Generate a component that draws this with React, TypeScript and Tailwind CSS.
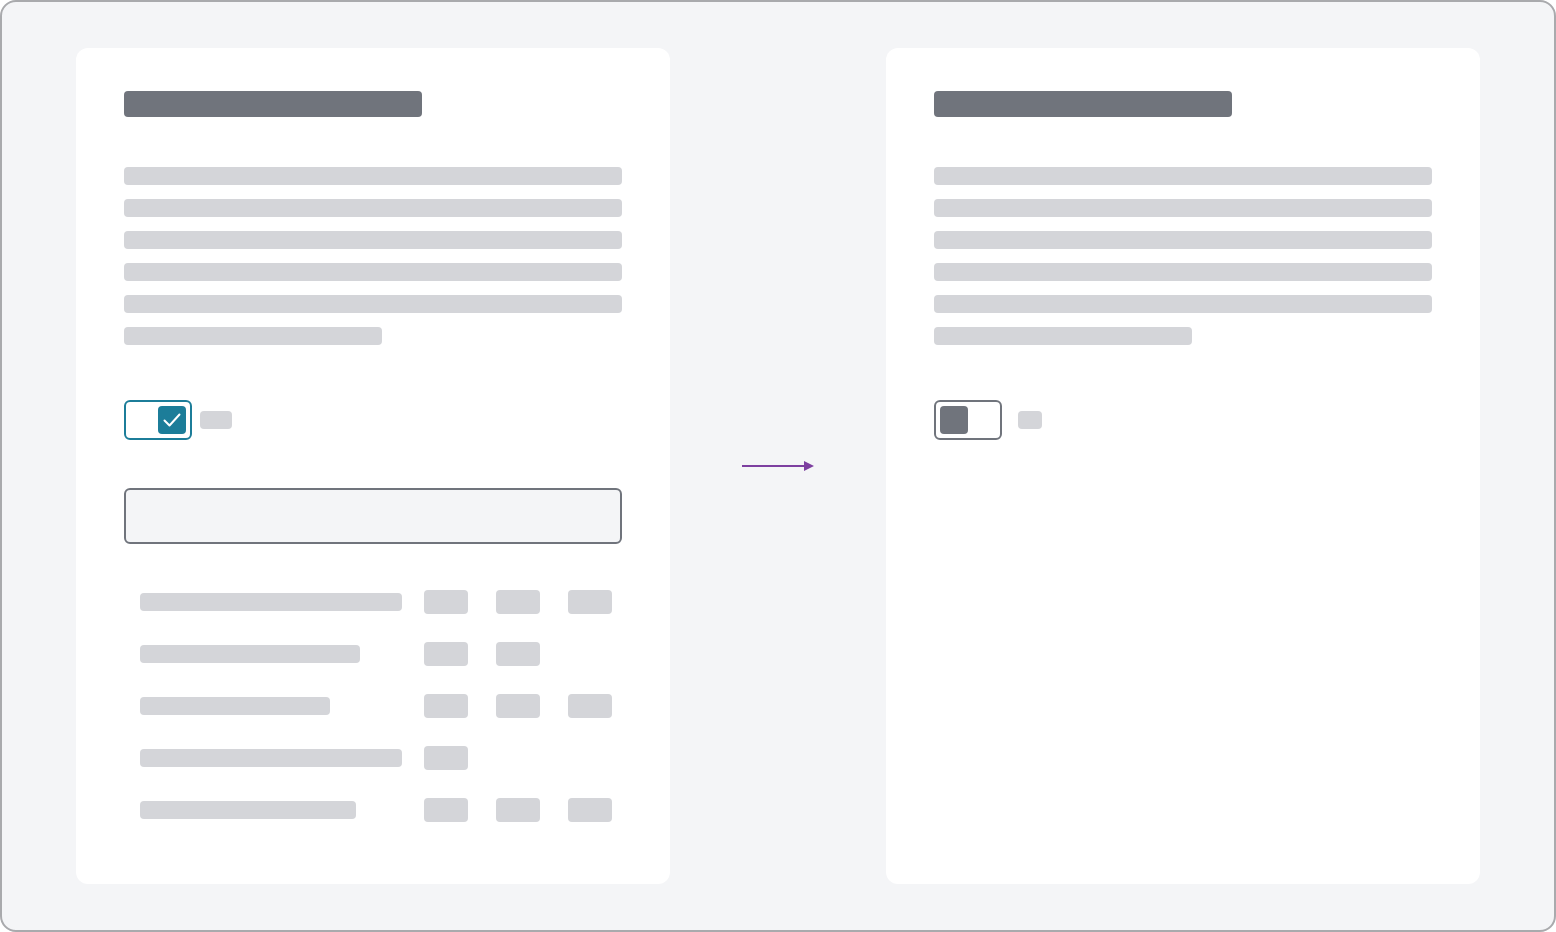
const lines = [498, 498, 498, 498, 498, 258];

const rows: { bar: number; cells: number }[] = [
  { bar: 262, cells: 3 },
  { bar: 220, cells: 2 },
  { bar: 190, cells: 3 },
  { bar: 262, cells: 1 },
  { bar: 216, cells: 3 },
];

function TextBlock() {
  return (
    <div className="flex flex-col gap-[14px]">
      {lines.map((w, i) => (
        <div key={i} className="h-[18px] rounded-[4px] bg-[#d4d5d9]" style={{ width: w }} />
      ))}
    </div>
  );
}

function Title() {
  return <div className="h-[26px] w-[298px] rounded-[4px] bg-[#70747c]" />;
}

function CheckedToggle() {
  return (
    <div className="flex items-center gap-2">
      <div className="flex h-10 w-[68px] items-center justify-end rounded-[6px] border-2 border-[#1c7d99] px-1">
        <div className="flex h-7 w-7 items-center justify-center rounded-[4px] bg-[#1c7d99]">
          <svg width="24" height="24" viewBox="0 0 24 24" fill="none">
            <path d="M4.5 12.5l5 5 10-11" stroke="#fff" strokeWidth="2" strokeLinecap="round" strokeLinejoin="round" />
          </svg>
        </div>
      </div>
      <div className="h-[18px] w-8 rounded-[4px] bg-[#d4d5d9]" />
    </div>
  );
}

function OffToggle() {
  return (
    <div className="flex items-center gap-4">
      <div className="flex h-10 w-[68px] items-center justify-start rounded-[6px] border-2 border-[#70747c] px-1">
        <div className="h-7 w-7 rounded-[4px] bg-[#70747c]" />
      </div>
      <div className="h-[18px] w-6 rounded-[4px] bg-[#d4d5d9]" />
    </div>
  );
}

export default function App() {
  return (
    <div className="h-[932px] w-[1556px] bg-white">
      <div className="flex h-full w-full items-start rounded-2xl border-2 border-[#a9aaad] bg-[#f4f5f7] pl-[74px] pt-[46px]">
        <div className="flex h-[836px] w-[594px] flex-col rounded-xl bg-white px-12 pt-[43px]">
          <Title />
          <div className="mt-[50px]">
            <TextBlock />
          </div>
          <div className="mt-[55px]">
            <CheckedToggle />
          </div>
          <div className="mt-12 h-14 w-[498px] rounded-[6px] border-2 border-[#70747c] bg-[#f4f5f7]" />
          <div className="mt-[46px] flex flex-col gap-7 pl-4">
            {rows.map((r, i) => (
              <div key={i} className="flex h-6 items-center">
                <div className="w-[284px]">
                  <div className="h-[18px] rounded-[4px] bg-[#d4d5d9]" style={{ width: r.bar }} />
                </div>
                <div className="flex gap-7">
                  {Array.from({ length: r.cells }).map((_, j) => (
                    <div key={j} className="h-6 w-11 rounded-[4px] bg-[#d4d5d9]" />
                  ))}
                </div>
              </div>
            ))}
          </div>
        </div>

        <div className="flex h-[836px] w-[216px] items-center justify-center pl-[2px]">
          <svg width="74" height="12" viewBox="0 0 74 12">
            <line x1="0" y1="6" x2="64" y2="6" stroke="#7d3fa0" strokeWidth="2" />
            <path d="M62 1l10 5-10 5z" fill="#7d3fa0" />
          </svg>
        </div>

        <div className="flex h-[836px] w-[594px] flex-col rounded-xl bg-white px-12 pt-[43px]">
          <Title />
          <div className="mt-[50px]">
            <TextBlock />
          </div>
          <div className="mt-[55px]">
            <OffToggle />
          </div>
        </div>
      </div>
    </div>
  );
}
